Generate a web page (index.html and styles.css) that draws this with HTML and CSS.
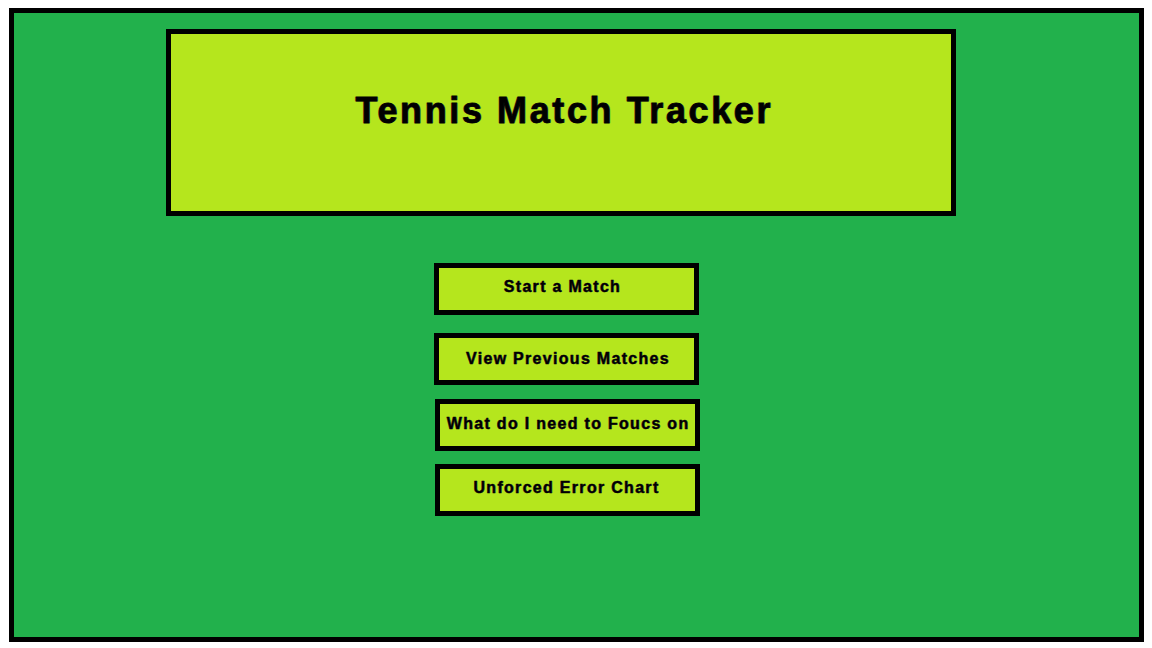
FILE: index.html
```html
<!DOCTYPE html>
<html lang="en">

<head>
   <meta charset="UTF-8">
   <meta name="viewport" content="width=device-width, initial-scale=1.0">
   <title>Tennis Match Tracker</title>
   <link rel="stylesheet" href="styles.css">
</head>

<body>

   <main class="court">
       <header class="title-box">
           <h1>Tennis Match Tracker</h1>
       </header>

       <nav class="menu">
           <button type="button" class="menu-button first">Start a Match</button>
           <button type="button" class="menu-button second">View Previous Matches</button>
           <button type="button" class="menu-button shifted">What do I need to Foucs on</button>
           <button type="button" class="menu-button shifted last">Unforced Error Chart</button>
       </nav>
   </main>

</body>

</html>
```

FILE: styles.css
```css
body {
    font-family: "Liberation Sans", Arial, sans-serif;
    margin: 8px 8px 0 9px;
    background-color: white;
}

.court {
    box-sizing: border-box;
    width: 1135px;
    height: 634px;
    background-color: #22B14C;
    border: 5px solid black;
    padding-top: 16px;
}

.title-box {
    box-sizing: border-box;
    width: 790px;
    height: 187px;
    margin-left: 152px;
    background-color: #B5E61D;
    border: 5px solid black;
    text-align: center;
}

h1 {
    margin: 56px 0 0 0;
    font-size: 36px;
    font-weight: bold;
    letter-spacing: 2.6px;
    text-indent: 6.6px;
    color: black;
    -webkit-text-stroke: 0.8px black;
    text-shadow: -1px 0 rgba(200, 40, 40, 0.35), 1px 0 rgba(40, 120, 255, 0.35);
}

.menu {
    display: flex;
    flex-direction: column;
    align-items: flex-start;
    margin: 47px 0 0 420px;
}

.menu-button {
    box-sizing: border-box;
    width: 265px;
    height: 52px;
    margin-bottom: 14px;
    padding: 0 0 2px 1.3px;
    background-color: #B5E61D;
    border: 5px solid black;
    font-family: "Liberation Sans", Arial, sans-serif;
    font-size: 16px;
    font-weight: bold;
    letter-spacing: 1.3px;
    color: black;
    -webkit-text-stroke: 0.4px black;
    text-shadow: -0.6px 0 rgba(200, 40, 40, 0.35), 0.6px 0 rgba(40, 120, 255, 0.35);
    cursor: pointer;
}

.menu-button.first {
    margin-bottom: 18px;
    padding: 0 8px 4px 0;
}

.menu-button.second {
    padding: 0 0 0 3px;
}

.menu-button.shifted {
    margin-left: 1px;
    margin-bottom: 13px;
}

.menu-button.last {
    padding: 0 2px 4px 0;
}
```
